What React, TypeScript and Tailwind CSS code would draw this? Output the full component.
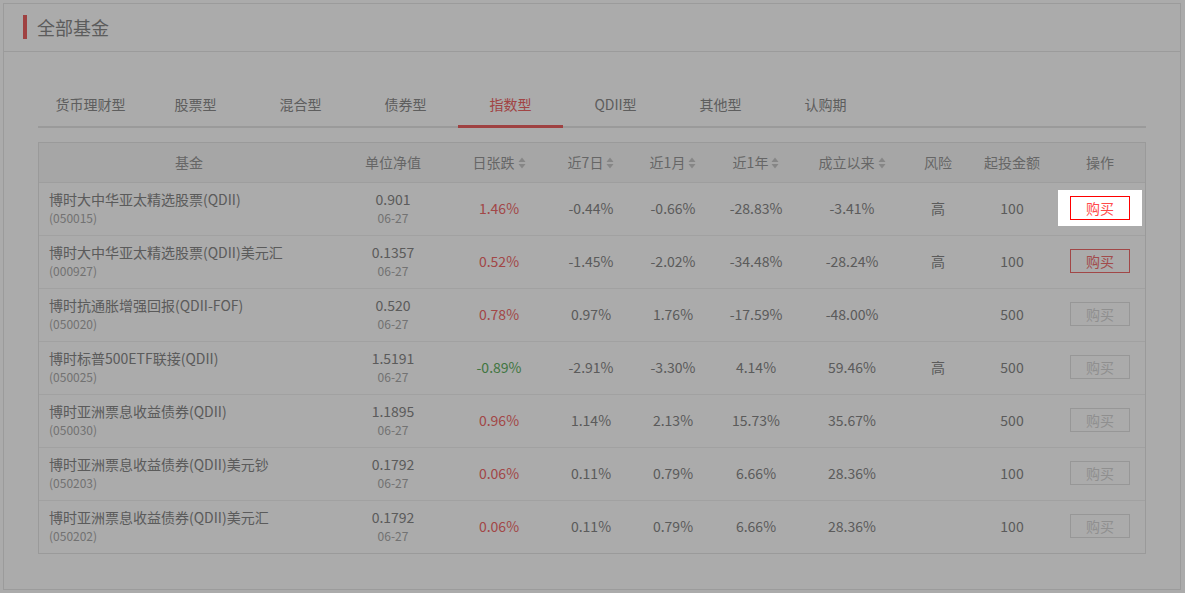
import React from "react";

type Row = {
  name: string;
  code: string;
  nav: string;
  day: string;
  w7: string;
  m1: string;
  y1: string;
  since: string;
  risk: string;
  min: string;
  buy: "hl" | "on" | "off";
};

const rows: Row[] = [
  { name: "博时大中华亚太精选股票(QDII)", code: "(050015)", nav: "0.901", day: "1.46%", w7: "-0.44%", m1: "-0.66%", y1: "-28.83%", since: "-3.41%", risk: "高", min: "100", buy: "hl" },
  { name: "博时大中华亚太精选股票(QDII)美元汇", code: "(000927)", nav: "0.1357", day: "0.52%", w7: "-1.45%", m1: "-2.02%", y1: "-34.48%", since: "-28.24%", risk: "高", min: "100", buy: "on" },
  { name: "博时抗通胀增强回报(QDII-FOF)", code: "(050020)", nav: "0.520", day: "0.78%", w7: "0.97%", m1: "1.76%", y1: "-17.59%", since: "-48.00%", risk: "", min: "500", buy: "off" },
  { name: "博时标普500ETF联接(QDII)", code: "(050025)", nav: "1.5191", day: "-0.89%", w7: "-2.91%", m1: "-3.30%", y1: "4.14%", since: "59.46%", risk: "高", min: "500", buy: "off" },
  { name: "博时亚洲票息收益债券(QDII)", code: "(050030)", nav: "1.1895", day: "0.96%", w7: "1.14%", m1: "2.13%", y1: "15.73%", since: "35.67%", risk: "", min: "500", buy: "off" },
  { name: "博时亚洲票息收益债券(QDII)美元钞", code: "(050203)", nav: "0.1792", day: "0.06%", w7: "0.11%", m1: "0.79%", y1: "6.66%", since: "28.36%", risk: "", min: "100", buy: "off" },
  { name: "博时亚洲票息收益债券(QDII)美元汇", code: "(050202)", nav: "0.1792", day: "0.06%", w7: "0.11%", m1: "0.79%", y1: "6.66%", since: "28.36%", risk: "", min: "100", buy: "off" },
];

const tabs = ["货币理财型", "股票型", "混合型", "债券型", "指数型", "QDII型", "其他型", "认购期"];

const SortIcon = () => (
  <svg width="8" height="12" viewBox="0 0 8 12" className="ml-[3px] inline-block">
    <path d="M4 0.5 L7.5 5 L0.5 5 Z" fill="#c8c8c8" />
    <path d="M0.5 7 L7.5 7 L4 11.5 Z" fill="#c8c8c8" />
  </svg>
);

const cols = [
  "w-[300px]",
  "w-[108px]",
  "w-[104px]",
  "w-[80px]",
  "w-[84px]",
  "w-[82px]",
  "w-[110px]",
  "w-[62px]",
  "w-[86px]",
  "w-[90px]",
];

const headers: { t: string; s?: boolean }[] = [
  { t: "基金" },
  { t: "单位净值" },
  { t: "日张跌", s: true },
  { t: "近7日", s: true },
  { t: "近1月", s: true },
  { t: "近1年", s: true },
  { t: "成立以来", s: true },
  { t: "风险" },
  { t: "起投金额" },
  { t: "操作" },
];

function BuyButton({ kind }: { kind: Row["buy"] }) {
  if (kind === "hl") {
    return (
      <div className="relative z-20 bg-white px-[12px] py-[6px]">
        <div className="flex h-[24px] w-[60px] items-center justify-center border border-[#ff0000] text-[14px] text-[#ff4a4a]">
          购买
        </div>
      </div>
    );
  }
  if (kind === "on") {
    return (
      <div className="flex h-[24px] w-[60px] items-center justify-center border border-[#f06a6a] text-[14px] text-[#f27070]">
        购买
      </div>
    );
  }
  return (
    <div className="flex h-[24px] w-[60px] items-center justify-center border border-[#e2e2e2] text-[14px] text-[#d6d6d6]">
      购买
    </div>
  );
}

function dayColor(v: string) {
  return v.startsWith("-") ? "text-[#62b062]" : "text-[#f26a6a]";
}

export default function App() {
  return (
    <div
      className="relative h-[593px] w-[1185px] overflow-hidden bg-white"
      style={{ fontFamily: '"Noto Sans CJK SC", "Open Sans", sans-serif' }}
    >
      <div className="ml-[3px] mt-[3px] flex h-[587px] w-[1178px] flex-col border border-[#e8e8e8]">
        {/* header */}
        <div className="flex h-[48px] items-center border-b border-[#e8e8e8] pb-[1px] pl-[19px]">
          <div className="h-[24px] w-[4px] bg-[#ee6262]" />
          <div className="ml-[10px] text-[18px] text-[#8a8a8a]">全部基金</div>
        </div>

        <div className="px-[34px] pt-[36px]">
          {/* tabs */}
          <div className="flex h-[40px] border-b-2 border-[#e6e6e6]">
            {tabs.map((t) => {
              const active = t === "指数型";
              return (
                <div
                  key={t}
                  className={
                    active
                      ? "relative flex w-[105px] items-center justify-center pb-[6px] text-[14px] text-[#f06666]"
                      : "relative flex w-[105px] items-center justify-center pb-[6px] text-[14px] text-[#8c8c8c]"
                  }
                >
                  {t}
                  {active && <div className="absolute bottom-[-2px] left-0 right-0 h-[3px] bg-[#ee6262]" />}
                </div>
              );
            })}
          </div>

          {/* table */}
          <div className="mt-[14px] border border-[#e6e6e6]">
            <div className="flex h-[40px] items-center border-b border-[#ececec] bg-[#f8f8f8] text-[14px] text-[#999]">
              {headers.map((h, i) => (
                <div key={h.t} className={`${cols[i]} flex items-center justify-center`}>
                  {h.t}
                  {h.s && <SortIcon />}
                </div>
              ))}
            </div>
            {rows.map((r, idx) => (
              <div
                key={r.code + idx}
                className={
                  idx === rows.length - 1
                    ? "flex h-[52px] items-center pb-[2px] text-[14px] text-[#888]"
                    : "flex h-[53px] items-center border-b border-[#f0f0f0] pb-[2px] text-[14px] text-[#888]"
                }
              >
                <div className={`${cols[0]} flex flex-col pl-[10px]`}>
                  <div className="leading-[20px]">{r.name}</div>
                  <div className="text-[12px] leading-[18px] text-[#aaa]">{r.code}</div>
                </div>
                <div className={`${cols[1]} flex flex-col items-center`}>
                  <div className="leading-[20px]">{r.nav}</div>
                  <div className="text-[12px] leading-[18px] text-[#aaa]">06-27</div>
                </div>
                <div className={`${cols[2]} text-center ${dayColor(r.day)}`}>{r.day}</div>
                <div className={`${cols[3]} text-center`}>{r.w7}</div>
                <div className={`${cols[4]} text-center`}>{r.m1}</div>
                <div className={`${cols[5]} text-center`}>{r.y1}</div>
                <div className={`${cols[6]} text-center`}>{r.since}</div>
                <div className={`${cols[7]} text-center`}>{r.risk}</div>
                <div className={`${cols[8]} text-center`}>{r.min}</div>
                <div className={`${cols[9]} flex items-center justify-center`}>
                  <BuyButton kind={r.buy} />
                </div>
              </div>
            ))}
          </div>
        </div>
      </div>

      {/* modal mask */}
      <div className="absolute inset-0 z-10 bg-black/[0.33]" />
    </div>
  );
}
